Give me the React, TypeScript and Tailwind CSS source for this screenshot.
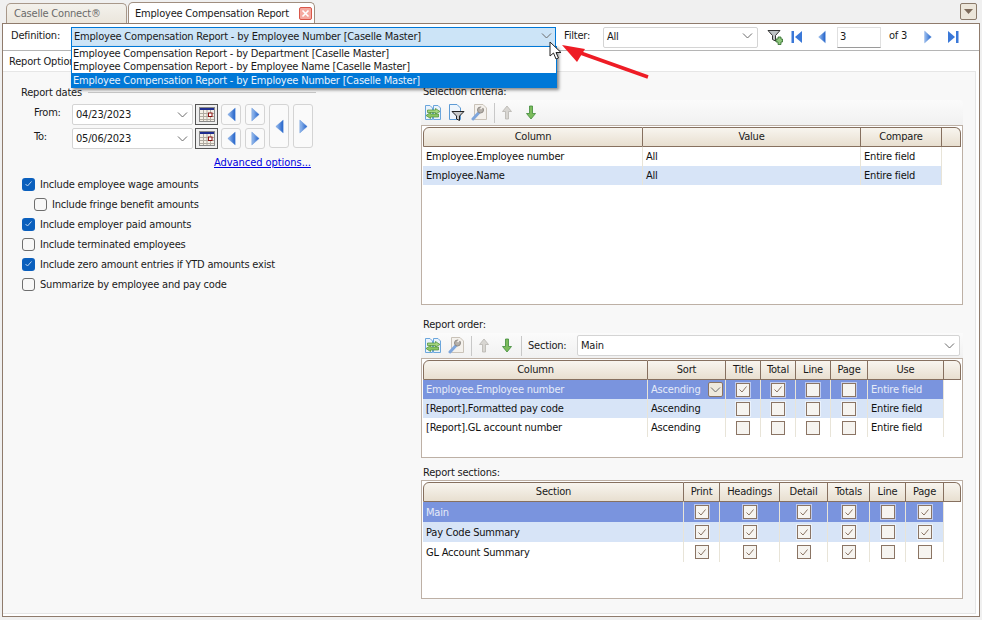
import React from "react";

const Tri = ({ dir, size = 12 }: { dir: "l" | "r"; size?: number }) => (
  <svg width={size} height={size + 4} viewBox="0 0 12 16">
    <defs>
      <linearGradient id="tri" x1="0" y1="0" x2="1" y2="0">
        <stop offset="0" stopColor="#9cc0f0" />
        <stop offset="1" stopColor="#1f5fc8" />
      </linearGradient>
    </defs>
    <polygon points={dir === "l" ? "10,1 10,15 2,8" : "2,1 2,15 10,8"} fill="url(#tri)" stroke="#5d8fd8" strokeWidth="0.5" />
  </svg>
);

const Chevron = ({ className = "" }: { className?: string }) => (
  <svg width="11" height="6" viewBox="0 0 11 6" className={className}>
    <path d="M1 0.5 L5.5 5 L10 0.5" fill="none" stroke="#6a6a6a" strokeWidth="1" />
  </svg>
);

const CalIcon = () => (
  <svg width="16" height="15" viewBox="0 0 16 15">
    <rect x="0.5" y="0.5" width="15" height="14" fill="#f4efe6" stroke="#8a8a8a" />
    <rect x="1" y="1" width="14" height="2" fill="#1f2d8f" />
    <path d="M1 6.5H15M1 9.5H15M1 12.5H15M4.5 3V14M8 3V14M11.5 3V14" stroke="#b0aaa0" strokeWidth="1" />
    <rect x="9.5" y="6" width="3.5" height="3.5" fill="#fff" stroke="#8a1010" />
  </svg>
);

const SwapDoc = () => (
  <svg width="18" height="17" viewBox="0 0 18 17">
    <path d="M1.5 1.5H6L8.5 4V15.5H1.5Z" fill="#eaf3fc" stroke="#6ba6dc" />
    <path d="M9.5 1.5H14L16.5 4V15.5H9.5Z" fill="#eaf3fc" stroke="#6ba6dc" />
    <path d="M3.5 6H11.5V4.5L16 7.5L11.5 10V8.5H3.5Z" fill="#a5d67f" stroke="#4c8c33" strokeWidth="0.7" />
    <path d="M14.5 10H6.5V8.5L2 11.5L6.5 14.5V13H14.5Z" fill="#8cc765" stroke="#4c8c33" strokeWidth="0.7" />
  </svg>
);
const FunnelDoc = () => (
  <svg width="17" height="17" viewBox="0 0 17 17">
    <path d="M1.5 0.5H9L12.5 4V15.5H1.5Z" fill="#eef5fc" stroke="#5d9bd5" />
    <path d="M4 7.5H16L11.5 12V16.5L8.5 15V12Z" fill="#c9c9c9" stroke="#222" strokeWidth="1" />
  </svg>
);
const WrenchDoc = () => (
  <svg width="17" height="17" viewBox="0 0 17 17">
    <path d="M3.5 0.5H12L15.5 4V15.5H3.5Z" fill="#f4f1ec" stroke="#c9c2b8" />
    <path d="M2 15L8 8.5" stroke="#7fa6dc" strokeWidth="3" strokeLinecap="round" />
    <circle cx="9.5" cy="6" r="3" fill="#b5b0aa" stroke="#8f8a84" />
    <path d="M9.5 5L12 2.5" stroke="#f4f1ec" strokeWidth="1.6" />
  </svg>
);
const UpArrow = () => (
  <svg width="12" height="15" viewBox="0 0 12 15">
    <path d="M6 1L10.5 6.5H7.5V14H4.5V6.5H1.5Z" fill="#d8d6d2" stroke="#b8b5b0" strokeWidth="0.8" />
  </svg>
);
const DownArrow = () => (
  <svg width="12" height="15" viewBox="0 0 12 15">
    <path d="M4.5 1H7.5V8.5H10.5L6 14L1.5 8.5H4.5Z" fill="#7cbc5c" stroke="#3f8a3a" strokeWidth="0.8" />
  </svg>
);
const Sep = () => <div className="h-[20px] w-px bg-[#c8c8c8]" />;

const Combo = ({ value, className = "" }: { value: string; className?: string }) => (
  <div className={`flex items-center justify-between bg-white border border-[#d4d4d4] rounded-[2px] pl-[3px] pr-[4px] ${className}`}>
    <span>{value}</span>
    <Chevron />
  </div>
);

const NavBtn = ({ dir, tall }: { dir: "l" | "r"; tall?: boolean }) => (
  <div className={`w-[20px] ${tall ? "h-[44px]" : "h-[21px]"} flex items-center justify-center border border-[#d4d4d4] rounded-[3px] bg-[#fafafa]`}>
    <Tri dir={dir} size={11} />
  </div>
);

const DateRow = ({ label, value }: { label: string; value: string }) => (
  <div className="flex items-center h-[21px]">
    <span className="w-[39px] pl-[1px] -mt-[5px]">{label}</span>
    <Combo value={value} className="w-[121px] h-[21px]" />
    <div className="ml-[2px] w-[23px] h-[21px] border border-[#555] bg-[#eeeeee] flex items-center justify-center">
      <CalIcon />
    </div>
    <div className="ml-[3px] flex gap-[4px]">
      <NavBtn dir="l" />
      <NavBtn dir="r" />
    </div>
  </div>
);

const Check = ({ label, checked, indent }: { label: string; checked?: boolean; indent?: boolean }) => (
  <div className={`flex items-center h-[20px] gap-[5px] ${indent ? "ml-[12px]" : ""}`}>
    {checked ? (
      <div className="w-[13px] h-[13px] rounded-[3px] bg-[#0a5fbd] flex items-center justify-center">
        <svg width="9" height="8" viewBox="0 0 9 8">
          <path d="M1.5 4L3.5 6L7.5 1.5" fill="none" stroke="#bcd6f2" strokeWidth="1" />
        </svg>
      </div>
    ) : (
      <div className="w-[13px] h-[13px] rounded-[3px] border border-[#6e6e6e] bg-[#f8f8f8]" />
    )}
    <span>{label}</span>
  </div>
);

const GridCheck = ({ on }: { on?: boolean }) => (
  <div className="w-[14px] h-[14px] border-[1.5px] border-[#8a7464] bg-[#f6f4f0] flex items-center justify-center outline outline-1 outline-white/50">
    {on && (
      <svg width="10" height="9" viewBox="0 0 10 9">
        <path d="M1.5 4.5L4 7L8.5 1.5" fill="none" stroke="#8a7464" strokeWidth="1" />
      </svg>
    )}
  </div>
);

type Cell = string | boolean | { sort: string };

const HeaderCell = ({ label, first, last }: { label?: string; first?: boolean; last?: boolean }) => (
  <div
    className={`h-[20px] pb-[2px] flex items-center justify-center bg-gradient-to-b from-[#f8f5ef] to-[#e8dfd0] border-y border-r border-[#86705f] ${first ? "border-l rounded-tl-[6px]" : ""} ${last ? "rounded-tr-[6px]" : ""}`}
  >
    {label}
  </div>
);

const DataGrid = ({
  cols,
  headers,
  rows,
  tone,
  height,
  rowH,
}: {
  cols: string;
  headers: string[];
  rows: Cell[][];
  tone: ("sel" | "alt" | "none")[];
  height: string;
  rowH: string;
}) => (
  <div className={`border border-[#bdb0a5] bg-white pt-[1px] pl-[1px] pr-[1px] ${height}`}>
    <div className={`grid ${cols}`}>
      {headers.map((h, i) => (
        <HeaderCell key={i} label={h} first={i === 0} last={i === headers.length - 1} />
      ))}
      {rows.map((row, r) =>
        [
          ...row.map((c, i) => {
            const bg = tone[r] === "sel" ? "bg-[#7a94de]" : tone[r] === "alt" ? "bg-[#d7e4f7]" : "bg-white";
            const fg = tone[r] === "sel" && typeof c === "string" ? "text-[#e6ebf8]" : "text-[#111]";
            const inner =
              typeof c === "boolean" ? (
                <div className="w-full flex justify-center"><GridCheck on={c} /></div>
              ) : typeof c === "string" ? (
                <span className="pl-[3px] whitespace-nowrap">{c}</span>
              ) : (
                <div className="w-full flex items-center justify-between pl-[3px] pr-[2px]">
                  <span className="text-[#e6ebf8]">{c.sort}</span>
                  <div className="w-[15px] h-[15px] border border-[#8a7464] bg-[#efe9dd] rounded-[2px] flex items-center justify-center">
                    <Chevron />
                  </div>
                </div>
              );
            return (
              <div key={`${r}-${i}`} className={`${rowH} flex items-center border-r border-[#e8e4d8] ${bg} ${fg}`}>
                {inner}
              </div>
            );
          }),
          <div key={`${r}-end`} className={`${rowH} bg-white`} />,
        ]
      )}
    </div>
  </div>
);

const ToolStrip = ({ children }: { children: React.ReactNode }) => (
  <div className="flex items-center h-[25px] gap-[6px] pl-[3px] rounded-t-[4px] bg-gradient-to-b from-[#fbfbfb] to-[#f1f1f1]">
    {children}
  </div>
);

export default function App() {
  return (
    <div className="relative w-[982px] h-[620px] overflow-hidden bg-[#f0f0f0] text-[11px] tracking-[-0.2px] leading-none text-[#1a1a1a] font-['DejaVu_Sans',sans-serif] [font-stretch:condensed] flex flex-col">
      {/* Tab strip */}
      <div className="h-[23px] flex items-end pl-[6px] pr-[5px] shrink-0">
        <div className="w-[121px] h-[20px] flex items-center pl-[7px] text-[#6a6a6a] bg-gradient-to-b from-[#f3f1ec] to-[#ebe6dc] border border-b-0 border-[#a8988a] rounded-t-[5px]">
          Caselle Connect®
        </div>
        <div className="ml-[1px] w-[187px] h-[21px] flex items-center justify-between pl-[6px] pr-[2px] bg-white border border-b-0 border-[#a08e7f] rounded-t-[5px]">
          <span className="whitespace-nowrap">Employee Compensation Report</span>
          <div className="w-[13px] h-[13px] rounded-[2px] bg-[#f5a9a0] border border-[#d9574a] flex items-center justify-center">
            <svg width="9" height="9" viewBox="0 0 9 9">
              <path d="M1.5 1.5L7.5 7.5M7.5 1.5L1.5 7.5" stroke="#fff" strokeWidth="1.6" />
            </svg>
          </div>
        </div>
        <div className="ml-auto mb-[3px] w-[17px] h-[17px] rounded-[2px] bg-[#ece6da] border border-[#8a7a6a] flex items-center justify-center">
          <svg width="9" height="5" viewBox="0 0 9 5"><polygon points="0,0 9,0 4.5,5" fill="#7d6a5a" /></svg>
        </div>
      </div>

      {/* Main frame */}
      <div className="ml-[2px] mr-[2px] h-[594px] border border-[#8f7b6c] bg-white flex flex-col shrink-0">
        {/* Toolbar */}
        <div className="h-[27px] shrink-0 border-b border-[#b5b5b5] flex items-center pl-[8px]">
          <span className="w-[60px] -mt-[4px]">Definition:</span>
          <div className="w-[485px] h-[21px] pb-[2px] flex items-center justify-between pl-[2px] pr-[3px] bg-[#cce4f7] border border-[#0078d7]">
            <span className="whitespace-nowrap">Employee Compensation Report - by Employee Number [Caselle Master]</span>
            <Chevron />
          </div>
          <span className="ml-[8px] w-[39px] -mt-[4px]">Filter:</span>
          <Combo value="All" className="w-[155px] h-[21px] pb-[2px]" />
          <div className="ml-[9px] flex items-center">
            <svg width="16" height="16" viewBox="0 0 16 16">
              <path d="M1 1.5H13L8.5 6.5V12L5.5 10.5V6.5Z" fill="#bfc4c6" stroke="#333" />
              <path d="M9 10H11V8H14V10H15.5V13H14V15.5H11V13H9Z" fill="#8fc77e" stroke="#2f6b2a" strokeWidth="0.8" />
            </svg>
            <svg width="12" height="14" viewBox="0 0 12 14" className="ml-[8px]">
              <rect x="0.5" y="1" width="2.5" height="12" fill="#3a78d8" />
              <polygon points="11,1 11,13 4,7" fill="#3a78d8" />
            </svg>
            <div className="ml-[14px]"><Tri dir="l" size={10} /></div>
            <div className="ml-[10px] w-[44px] h-[21px] pb-[2px] flex items-center pl-[2px] bg-white border border-[#e0e0e0] border-b-[#9a9a9a]">3</div>
            <span className="ml-[8px] w-[27px] -mt-[4px]">of 3</span>
            <div className="ml-[7px]"><Tri dir="r" size={10} /></div>
            <svg width="12" height="14" viewBox="0 0 12 14" className="ml-[14px]">
              <polygon points="1,1 1,13 8,7" fill="#3a78d8" />
              <rect x="9" y="1" width="2.5" height="12" fill="#3a78d8" />
            </svg>
          </div>
        </div>

        {/* Sub tab */}
        <div className="h-[20px] shrink-0 flex items-center pl-[6px]">Report Options</div>

        {/* Panel */}
        <div className="flex-1 bg-[#f8f8f8] border-t border-r border-b border-[#e6e6e6] mr-[3px] mb-[2px] flex">
          {/* Left column */}
          <div className="w-[418px] shrink-0 pl-[18px] pt-[13px] flex flex-col">
            <div className="flex items-center gap-[6px] h-[14px] w-[295px]">
              <span className="whitespace-nowrap">Report dates</span>
              <div className="flex-1 h-px bg-[#c8c8c8]" />
            </div>
            <div className="flex mt-[5px]">
              <div className="pl-[12px] flex flex-col gap-[3px]">
                <DateRow label="From:" value="04/23/2023" />
                <DateRow label="To:" value="05/06/2023" />
              </div>
              <div className="ml-[4px] flex gap-[4px]">
                <NavBtn dir="l" tall />
                <NavBtn dir="r" tall />
              </div>
            </div>
            <a className="ml-[193px] mt-[8px] h-[13px] text-[#0000e0] underline whitespace-nowrap tracking-[-0.05px]">Advanced options...</a>
            <div className="mt-[4px] ml-[1px] flex flex-col">
              <Check label="Include employee wage amounts" checked />
              <Check label="Include fringe benefit amounts" indent />
              <Check label="Include employer paid amounts" checked />
              <Check label="Include terminated employees" />
              <Check label="Include zero amount entries if YTD amounts exist" checked />
              <Check label="Summarize by employee and pay code" />
            </div>
          </div>

          {/* Right column */}
          <div className="w-[542px] shrink-0 pt-[14px] flex flex-col">
            <div className="h-[14px] pl-[2px]">Selection criteria:</div>
            <ToolStrip>
              <SwapDoc />
              <FunnelDoc />
              <WrenchDoc />
              <Sep />
              <UpArrow />
              <div className="ml-[6px]"><DownArrow /></div>
            </ToolStrip>
            <DataGrid
              cols="grid-cols-[220px_218px_81px_19px]"
              headers={["Column", "Value", "Compare", ""]}
              rows={[
                ["Employee.Employee number", "All", "Entire field"],
                ["Employee.Name", "All", "Entire field"],
              ]}
              tone={["none", "alt"]}
              height="h-[180px]"
              rowH="h-[19px]"
            />
            <div className="h-[14px] pl-[2px] mt-[14px]">Report order:</div>
            <div className="flex items-center h-[25px] gap-[6px] pl-[3px] pr-[3px] bg-gradient-to-b from-[#fbfbfb] to-[#f1f1f1]">
              <SwapDoc />
              <WrenchDoc />
              <Sep />
              <UpArrow />
              <div className="ml-[5px]"><DownArrow /></div>
              <div className="ml-[2px]"><Sep /></div>
              <span className="whitespace-nowrap w-[43px]">Section:</span>
              <Combo value="Main" className="flex-1 h-[21px]" />
            </div>
            <DataGrid
              cols="grid-cols-[225px_78px_35px_35px_35px_37px_76px_17px]"
              headers={["Column", "Sort", "Title", "Total", "Line", "Page", "Use", ""]}
              rows={[
                ["Employee.Employee number", { sort: "Ascending" }, true, true, false, false, "Entire field"],
                ["[Report].Formatted pay code", "Ascending", false, false, false, false, "Entire field"],
                ["[Report].GL account number", "Ascending", false, false, false, false, "Entire field"],
              ]}
              tone={["sel", "alt", "none"]}
              height="h-[100px]"
              rowH="h-[19px]"
            />
            <div className="h-[13px] pl-[2px] mt-[9px]">Report sections:</div>
            <DataGrid
              cols="grid-cols-[261px_36px_60px_48px_42px_36px_38px_17px]"
              headers={["Section", "Print", "Headings", "Detail", "Totals", "Line", "Page", ""]}
              rows={[
                ["Main", true, true, true, true, false, true],
                ["Pay Code Summary", true, true, true, true, false, true],
                ["GL Account Summary", true, true, true, true, false, false],
              ]}
              tone={["sel", "alt", "none"]}
              height="h-[119px]"
              rowH="h-[20px]"
            />
          </div>
        </div>
      </div>

      {/* Open dropdown list */}
      <div className="absolute left-[71px] top-[46px] w-[486px] h-[42px] bg-white border border-[#0078d7] shadow-[2px_2px_3px_rgba(0,0,0,0.45)] flex flex-col">
        <div className="h-[13px] flex items-center pl-[1px]">Employee Compensation Report - by Department [Caselle Master]</div>
        <div className="h-[13px] flex items-center pl-[1px]">Employee Compensation Report - by Employee Name [Caselle Master]</div>
        <div className="h-[14px] flex items-center pl-[1px] bg-[#0078d7] text-[#e8f2fb]">Employee Compensation Report - by Employee Number [Caselle Master]</div>
      </div>

      {/* Cursor */}
      <svg className="absolute left-[549px] top-[41px]" width="14" height="19" viewBox="0 0 14 19">
        <path d="M1 1V15L4.5 12L7 18L9.5 17L7 11.5H12Z" fill="#fff" stroke="#222" strokeWidth="1" />
      </svg>

      {/* Red annotation arrow */}
      <svg className="absolute left-[555px] top-[40px]" width="100" height="42" viewBox="0 0 100 42">
        <path d="M93 37L20 11" stroke="#ee1c25" strokeWidth="3.5" />
        <polygon points="7,5 30,9 22,22" fill="#ee1c25" />
      </svg>
    </div>
  );
}
